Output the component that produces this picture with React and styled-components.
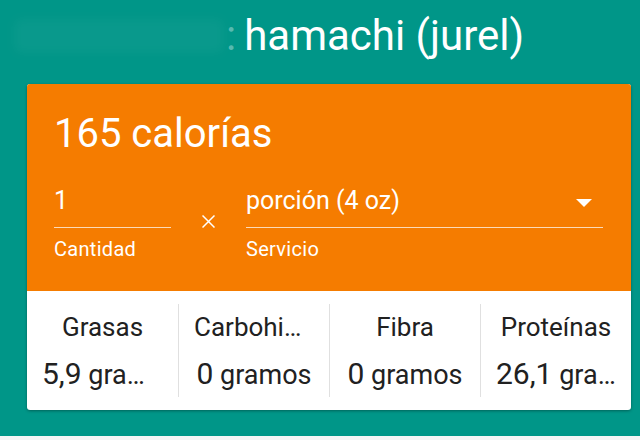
import React from 'react';
import styled, { createGlobalStyle } from 'styled-components';

const GlobalStyle = createGlobalStyle`
  html, body {
    margin: 0;
    padding: 0;
    background: #f5f5f5;
    font-family: Roboto, "Noto Sans", sans-serif;
  }
`;

const stats = [
  { label: 'Grasas', amount: '5,9', unit: 'gramos' },
  { label: 'Carbohidratos', amount: '0', unit: 'gramos' },
  { label: 'Fibra', amount: '0', unit: 'gramos' },
  { label: 'Proteínas', amount: '26,1', unit: 'gramos' },
];

const App = () => {
  return (
    <>
      <GlobalStyle />
      <Screen>
        <TitleRow>
          <Redacted />
          <Colon>:</Colon>
          <Title>hamachi (jurel)</Title>
        </TitleRow>
        <Card>
          <Summary>
            <Calories>165 calorías</Calories>
            <FieldRow>
              <QuantityField>
                <FieldValue>1</FieldValue>
                <FieldLabel>Cantidad</FieldLabel>
              </QuantityField>
              <Times>
                <svg width="13" height="13" viewBox="0 0 13 13">
                  <path d="M0.5 0.5 L12.5 12.5 M12.5 0.5 L0.5 12.5" stroke="#fff" strokeWidth="1.5" />
                </svg>
              </Times>
              <ServingField>
                <FieldValue>
                  <span>porción (4 oz)</span>
                  <Arrow width="16" height="8" viewBox="0 0 16 8">
                    <polygon points="0,0 16,0 8,8" fill="#fff" />
                  </Arrow>
                </FieldValue>
                <FieldLabel>Servicio</FieldLabel>
              </ServingField>
            </FieldRow>
          </Summary>
          <StatsRow>
            {stats.map((s) => (
              <StatColumn key={s.label}>
                <StatLabel>{s.label}</StatLabel>
                <StatValue>
                  <Amount>{s.amount}</Amount> {s.unit}
                </StatValue>
              </StatColumn>
            ))}
          </StatsRow>
        </Card>
      </Screen>
    </>
  );
};

const Screen = styled.div`
  height: 436px;
  background: #009688;
  overflow: hidden;
`;

const TitleRow = styled.div`
  display: flex;
  align-items: center;
  height: 50px;
  margin-top: 11px;
  padding-left: 14px;
`;

const Redacted = styled.div`
  width: 210px;
  height: 34px;
  margin-right: 2px;
  border-radius: 8px;
  background: rgba(255, 255, 255, 0.035);
  filter: blur(5px);
`;

const Colon = styled.span`
  font-size: 42px;
  line-height: 50px;
  color: rgba(255, 255, 255, 0.35);
  margin-right: 8px;
`;

const Title = styled.h1`
  margin: 0;
  font-size: 42px;
  font-weight: 400;
  line-height: 50px;
  color: #fff;
  white-space: nowrap;
`;

const Card = styled.div`
  margin: 23px 9px 0 27px;
  border-radius: 3px;
  overflow: hidden;
  background: #fff;
  box-shadow: 0 1px 3px rgba(0, 0, 0, 0.35);
`;

const Summary = styled.div`
  background: #f57c00;
  padding: 26px 28px 30px 27px;
  color: #fff;
`;

const Calories = styled.div`
  font-size: 40px;
  line-height: 48px;
  margin-bottom: 28px;
`;

const FieldRow = styled.div`
  display: flex;
  align-items: flex-start;
`;

const QuantityField = styled.div`
  width: 117px;
  display: flex;
  flex-direction: column;
`;

const ServingField = styled.div`
  flex: 1;
  display: flex;
  flex-direction: column;
`;

const FieldValue = styled.div`
  display: flex;
  align-items: flex-start;
  justify-content: space-between;
  font-size: 25px;
  line-height: 30px;
  padding-bottom: 11px;
  border-bottom: 1px solid rgba(255, 255, 255, 0.72);
`;

const Arrow = styled.svg`
  margin: 13px 11px 0 0;
`;

const FieldLabel = styled.div`
  font-size: 20px;
  line-height: 24px;
  letter-spacing: 0.3px;
  margin-top: 9px;
`;

const Times = styled.div`
  width: 75px;
  display: flex;
  justify-content: center;
  padding-top: 29px;
`;

const StatsRow = styled.div`
  display: grid;
  grid-template-columns: repeat(4, 1fr);
  padding: 13px 0;
`;

const StatColumn = styled.div`
  min-width: 0;
  padding: 7px 15px 4px;
  text-align: center;
  color: #212121;
  & + & {
    border-left: 1px solid #e0e0e0;
  }
`;

const StatLabel = styled.div`
  font-size: 26px;
  line-height: 32px;
  white-space: nowrap;
  overflow: hidden;
  text-overflow: ellipsis;
  margin-bottom: 13px;
`;

const StatValue = styled.div`
  font-size: 27px;
  line-height: 36px;
  white-space: nowrap;
  overflow: hidden;
  text-overflow: ellipsis;
`;

const Amount = styled.span`
  font-size: 30px;
`;

export default App;
